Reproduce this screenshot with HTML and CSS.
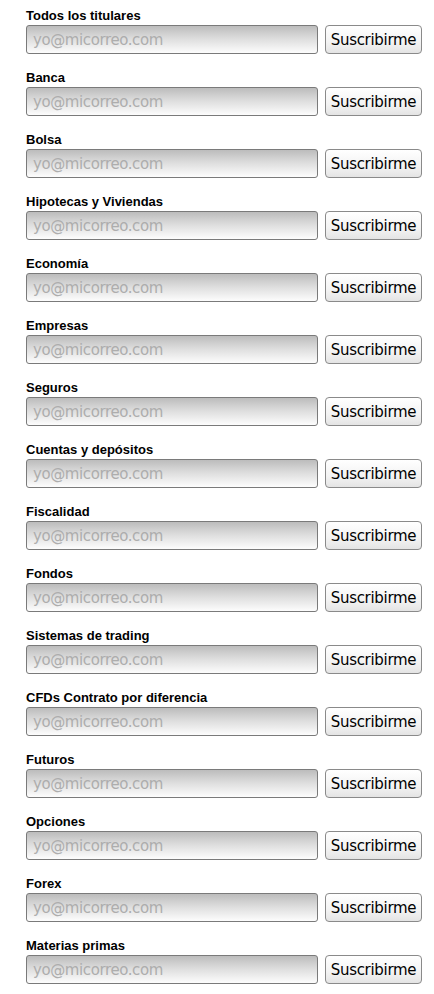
FILE: index.html
```html
<!DOCTYPE html>
<html lang="es">
<head>
<meta charset="utf-8">
<title>Suscripciones</title>
<link rel="stylesheet" href="styles.css">
</head>
<body>
<div class="list">
  <div class="row"><div class="label">Todos los titulares</div><div class="controls"><input class="email" type="text" placeholder="yo@micorreo.com"><button class="btn">Suscribirme</button></div></div>
  <div class="row"><div class="label">Banca</div><div class="controls"><input class="email" type="text" placeholder="yo@micorreo.com"><button class="btn">Suscribirme</button></div></div>
  <div class="row"><div class="label">Bolsa</div><div class="controls"><input class="email" type="text" placeholder="yo@micorreo.com"><button class="btn">Suscribirme</button></div></div>
  <div class="row"><div class="label">Hipotecas y Viviendas</div><div class="controls"><input class="email" type="text" placeholder="yo@micorreo.com"><button class="btn">Suscribirme</button></div></div>
  <div class="row"><div class="label">Economía</div><div class="controls"><input class="email" type="text" placeholder="yo@micorreo.com"><button class="btn">Suscribirme</button></div></div>
  <div class="row"><div class="label">Empresas</div><div class="controls"><input class="email" type="text" placeholder="yo@micorreo.com"><button class="btn">Suscribirme</button></div></div>
  <div class="row"><div class="label">Seguros</div><div class="controls"><input class="email" type="text" placeholder="yo@micorreo.com"><button class="btn">Suscribirme</button></div></div>
  <div class="row"><div class="label">Cuentas y depósitos</div><div class="controls"><input class="email" type="text" placeholder="yo@micorreo.com"><button class="btn">Suscribirme</button></div></div>
  <div class="row"><div class="label">Fiscalidad</div><div class="controls"><input class="email" type="text" placeholder="yo@micorreo.com"><button class="btn">Suscribirme</button></div></div>
  <div class="row"><div class="label">Fondos</div><div class="controls"><input class="email" type="text" placeholder="yo@micorreo.com"><button class="btn">Suscribirme</button></div></div>
  <div class="row"><div class="label">Sistemas de trading</div><div class="controls"><input class="email" type="text" placeholder="yo@micorreo.com"><button class="btn">Suscribirme</button></div></div>
  <div class="row"><div class="label">CFDs Contrato por diferencia</div><div class="controls"><input class="email" type="text" placeholder="yo@micorreo.com"><button class="btn">Suscribirme</button></div></div>
  <div class="row"><div class="label">Futuros</div><div class="controls"><input class="email" type="text" placeholder="yo@micorreo.com"><button class="btn">Suscribirme</button></div></div>
  <div class="row"><div class="label">Opciones</div><div class="controls"><input class="email" type="text" placeholder="yo@micorreo.com"><button class="btn">Suscribirme</button></div></div>
  <div class="row"><div class="label">Forex</div><div class="controls"><input class="email" type="text" placeholder="yo@micorreo.com"><button class="btn">Suscribirme</button></div></div>
  <div class="row"><div class="label">Materias primas</div><div class="controls"><input class="email" type="text" placeholder="yo@micorreo.com"><button class="btn">Suscribirme</button></div></div>
</div>
</body>
</html>
```
FILE: styles.css
```css
html, body {
  margin: 0;
  padding: 0;
  background: #ffffff;
}
body {
  font-family: "Liberation Sans", Arial, sans-serif;
}
.list {
  display: flex;
  flex-direction: column;
  gap: 16px;
  padding: 8px 0 0 26px;
}
.label {
  font-size: 13px;
  font-weight: bold;
  line-height: 15px;
  margin-bottom: 2px;
  color: #000;
}
.controls {
  display: flex;
  gap: 7px;
  height: 29px;
}
.email {
  box-sizing: border-box;
  width: 292px;
  height: 29px;
  margin: 0;
  padding: 1px 0 0 6px;
  border: 1px solid #7a7a7a;
  border-radius: 3px;
  background: linear-gradient(to bottom, #bcbcbc 0%, #dcdcdc 45%, #fdfdfd 100%);
  font-family: "DejaVu Sans", sans-serif;
  font-size: 15px;
  letter-spacing: -0.4px;
  color: #333;
  outline: none;
}
.email::placeholder {
  color: #adadad;
}
.btn {
  box-sizing: border-box;
  width: 97px;
  height: 29px;
  margin: 0;
  padding: 1px 0 0 0;
  border: 1px solid #8a8a8a;
  border-radius: 4px;
  background: linear-gradient(to bottom, #ffffff 0%, #f3f3f3 60%, #e4e4e4 100%);
  font-family: "DejaVu Sans", sans-serif;
  font-size: 15px;
  letter-spacing: -0.3px;
  color: #000;
}
```
